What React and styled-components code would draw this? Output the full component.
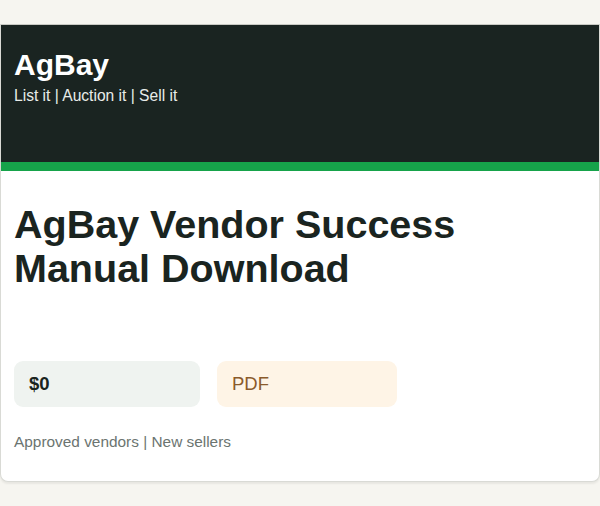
import React from 'react';
import styled, { createGlobalStyle } from 'styled-components';

const GlobalStyle = createGlobalStyle`
  html, body {
    margin: 0;
    padding: 0;
    background: #f6f5f0;
    font-family: "Liberation Sans", Arial, sans-serif;
  }
`;

const Page = styled.div`
  padding-top: 24px;
  padding-bottom: 24px;
`;

const Card = styled.article`
  width: 600px;
  box-sizing: border-box;
  background: #ffffff;
  border: 1px solid #d9dad5;
  border-top-color: #c9cac4;
  border-radius: 0 0 8px 8px;
  box-shadow: 0 2px 2px rgba(0, 0, 0, 0.06);
  overflow: hidden;
`;

const Header = styled.header`
  background: #1a2421;
  border-bottom: 9px solid #16a34a;
  padding: 23px 13px 0;
  height: 146px;
  box-sizing: border-box;
  color: #ffffff;
`;

const Brand = styled.h1`
  margin: 0;
  font-size: 30px;
  line-height: 34px;
  font-weight: 700;
`;

const Tagline = styled.p`
  margin: 5px 0 0;
  font-size: 15.6px;
  line-height: 18px;
  color: #e8ece9;
`;

const Body = styled.section`
  padding: 31px 13px 30px;
`;

const Title = styled.h2`
  margin: 0;
  font-size: 39.5px;
  line-height: 44px;
  font-weight: 700;
  color: #1a2420;
  max-width: 470px;
`;

const Chips = styled.div`
  display: flex;
  gap: 17px;
  margin-top: 71px;
`;

const Chip = styled.div`
  width: ${p => p.$width}px;
  height: 46px;
  box-sizing: border-box;
  padding: 0 15px;
  display: flex;
  align-items: center;
  border-radius: 9px;
  font-size: 18.5px;
  background: ${p => (p.$tone === 'warm' ? '#fef4e6' : '#eff3f0')};
  color: ${p => (p.$tone === 'warm' ? '#8a5a2b' : '#1a2420')};
  font-weight: ${p => (p.$bold ? 700 : 400)};
`;

const Note = styled.p`
  margin: 26px 0 0;
  font-size: 15.4px;
  line-height: 18px;
  color: #6b7470;
`;

export default function App() {
  return (
    <Page>
      <GlobalStyle />
      <Card>
        <Header>
          <Brand>AgBay</Brand>
          <Tagline>List it | Auction it | Sell it</Tagline>
        </Header>
        <Body>
          <Title>AgBay Vendor Success Manual Download</Title>
          <Chips>
            <Chip $width={186} $bold>$0</Chip>
            <Chip $width={180} $tone="warm">PDF</Chip>
          </Chips>
          <Note>Approved vendors | New sellers</Note>
        </Body>
      </Card>
    </Page>
  );
}
